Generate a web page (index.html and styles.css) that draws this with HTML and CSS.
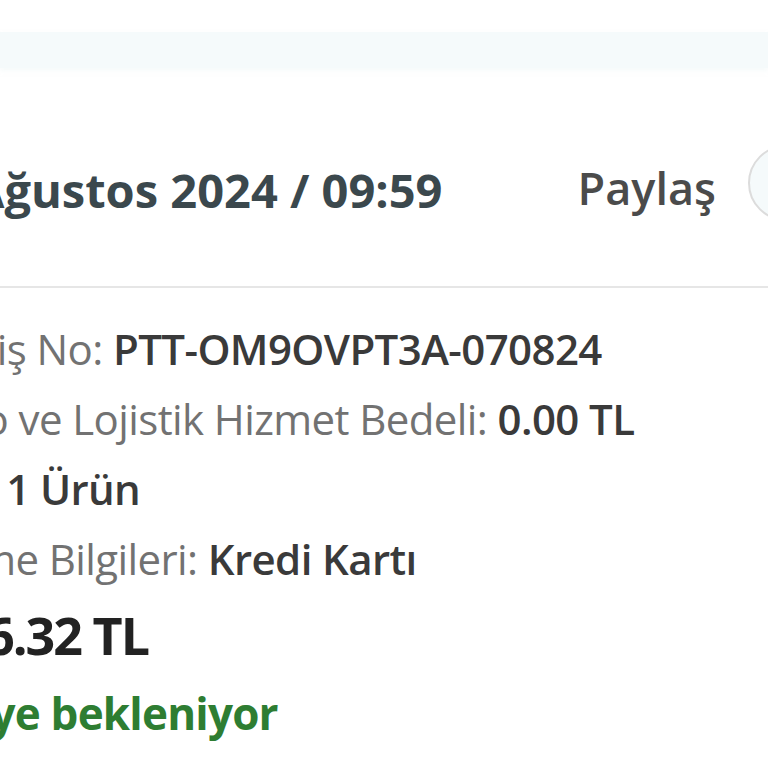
FILE: index.html
```html
<!DOCTYPE html>
<html lang="tr">
<head>
<meta charset="utf-8">
<link rel="stylesheet" href="styles.css">
</head>
<body>
<div class="viewport">
  <div class="band"></div>
  <div class="page">
    <div class="header">
      <div class="date">07 Ağustos 2024 / 09:59</div>
      <div class="share">
        <span class="share-label">Paylaş</span>
        <span class="share-btn"></span>
      </div>
    </div>
    <div class="details">
      <div class="row row-order"><span class="label">Sipariş No: </span><span class="value">PTT-OM9OVPT3A-070824</span></div>
      <div class="row"><span class="label">Kargo ve Lojistik Hizmet Bedeli: </span><span class="value">0.00 TL</span></div>
      <div class="row"><span class="label">Adet: </span><span class="value">1 Ürün</span></div>
      <div class="row"><span class="label">Ödeme Bilgileri: </span><span class="value">Kredi Kartı</span></div>
      <div class="total">1,316.32 TL</div>
      <div class="status">Tediye bekleniyor</div>
    </div>
  </div>
</div>
</body>
</html>
```
FILE: styles.css
```css
html, body {
  margin: 0;
  padding: 0;
  background: #ffffff;
}
body {
  font-family: "Open Sans", "Noto Sans", sans-serif;
  overflow: hidden;
  width: 768px;
  height: 768px;
}
.viewport {
  width: 768px;
  height: 768px;
  overflow: hidden;
  padding-top: 32px;
  box-sizing: border-box;
}
.band {
  height: 36px;
  background: #f5fafb;
  box-shadow: 0 3px 4px rgba(240, 247, 248, 0.5);
}
.page {
  margin-left: -103px;
  margin-right: -56px;
}
.header {
  display: flex;
  align-items: flex-start;
  justify-content: space-between;
  padding-top: 77px;
  padding-bottom: 58px;
  border-bottom: 2px solid #e6e6e6;
}
.date {
  font-size: 47px;
  font-weight: 700;
  color: #3b484d;
  line-height: 76px;
  white-space: nowrap;
  margin-left: 9px;
  margin-top: 7px;
}
.share {
  display: flex;
  align-items: flex-start;
  gap: 32px;
}
.share-label {
  font-size: 45px;
  font-weight: 600;
  color: #4b4b4b;
  line-height: 76px;
  margin-top: 5px;
}
.share-btn {
  width: 76px;
  height: 76px;
  border-radius: 50%;
  background: #f5fafb;
  border: 2px solid #dcdcdc;
  box-sizing: border-box;
}
.details {
  padding-top: 26px;
  white-space: nowrap;
}
.row {
  font-size: 42px;
  line-height: 70px;
  letter-spacing: -0.6px;
}
.row-order {
  padding-left: 3px;
}
.label {
  color: #727272;
}
.value {
  color: #3a3a3a;
  font-weight: 600;
}
.total {
  font-size: 52px;
  font-weight: 700;
  color: #222222;
  line-height: 70px;
  letter-spacing: -2px;
  margin-top: 6px;
  margin-left: -8px;
}
.status {
  font-size: 44px;
  font-weight: 700;
  color: #2e7d32;
  line-height: 70px;
  letter-spacing: -0.8px;
  margin-top: 8px;
  margin-left: 4px;
}
```
